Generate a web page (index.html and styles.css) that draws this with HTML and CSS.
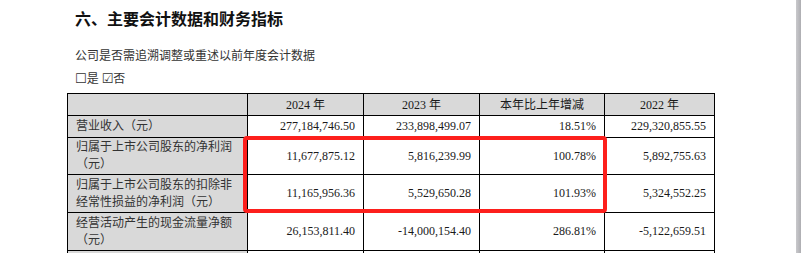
FILE: index.html
```html
<!DOCTYPE html>
<html lang="zh-CN">
<head>
<meta charset="utf-8">
<link rel="stylesheet" href="styles.css">
</head>
<body>
<div class="page">
  <div class="content">
    <h1 class="title">六、主要会计数据和财务指标</h1>
    <p class="note">公司是否需追溯调整或重述以前年度会计数据</p>
    <p class="choice"><span class="box">☐</span>是 <span class="box">☑</span>否</p>
    <div class="table-wrap">
      <table class="fin">
        <colgroup>
          <col class="c1"><col class="c2"><col class="c3"><col class="c4"><col class="c5">
        </colgroup>
        <tr class="r-head">
          <th class="lbl"></th>
          <th>2024 年</th>
          <th>2023 年</th>
          <th>本年比上年增减</th>
          <th>2022 年</th>
        </tr>
        <tr class="r1">
          <td class="lbl">营业收入（元）</td>
          <td class="num">277,184,746.50</td>
          <td class="num">233,898,499.07</td>
          <td class="num">18.51%</td>
          <td class="num">229,320,855.55</td>
        </tr>
        <tr class="r2">
          <td class="lbl">归属于上市公司股东的净利润（元）</td>
          <td class="num">11,677,875.12</td>
          <td class="num">5,816,239.99</td>
          <td class="num">100.78%</td>
          <td class="num">5,892,755.63</td>
        </tr>
        <tr class="r3">
          <td class="lbl">归属于上市公司股东的扣除非经常性损益的净利润（元）</td>
          <td class="num">11,165,956.36</td>
          <td class="num">5,529,650.28</td>
          <td class="num">101.93%</td>
          <td class="num">5,324,552.25</td>
        </tr>
        <tr class="r4">
          <td class="lbl">经营活动产生的现金流量净额（元）</td>
          <td class="num">26,153,811.40</td>
          <td class="num">-14,000,154.40</td>
          <td class="num">286.81%</td>
          <td class="num">-5,122,659.51</td>
        </tr>
        <tr class="r5">
          <td class="lbl"></td>
          <td class="num"></td>
          <td class="num"></td>
          <td class="num"></td>
          <td class="num"></td>
        </tr>
      </table>
      <div class="highlight"></div>
    </div>
  </div>
  <div class="edge"></div>
</div>
</body>
</html>
```
FILE: styles.css
```css
html, body {
  margin: 0;
  padding: 0;
  background: #ffffff;
  height: 100%;
  overflow: hidden;
}
.page {
  display: flex;
  height: 253px;
  overflow: hidden;
}
.content {
  flex: 1;
  padding-top: 8px;
}
.edge {
  width: 5px;
  background: linear-gradient(to right, #c9c9cc, #aeaeb2);
}
.title {
  margin: 0 0 0 75px;
  font-family: "Noto Sans CJK SC", sans-serif;
  font-weight: 700;
  font-size: 16px;
  line-height: 20px;
  color: #111;
}
.note, .choice {
  margin: 0 0 0 75px;
  font-family: "Liberation Serif", "Noto Sans CJK SC", serif;
  font-size: 12px;
  line-height: 16px;
  color: #333;
}
.note { margin-top: 20px; }
.choice { margin-top: 7px; }
.box {
  font-family: "DejaVu Sans", sans-serif;
  font-size: 13px;
  line-height: 16px;
  color: #333;
}
.table-wrap {
  position: relative;
  margin: 6px 0 0 67px;
  width: 647px;
}
.fin {
  border-collapse: collapse;
  table-layout: fixed;
  width: 647px;
  font-family: "Liberation Serif", "Noto Sans CJK SC", serif;
  font-size: 12px;
  color: #1a1a1a;
}
.c1 { width: 180px; }
.c2 { width: 116px; }
.c3 { width: 116px; }
.c4 { width: 125px; }
.c5 { width: 110px; }
.fin th, .fin td {
  border: 1px solid #000;
  padding: 0 8px;
  vertical-align: middle;
}
.fin th {
  background: #d9d9d9;
  font-weight: normal;
  text-align: center;
  line-height: 16px;
}
.fin td.lbl {
  background: #d9d9d9;
  color: #333;
  text-align: left;
  line-height: 17px;
  padding-right: 4px;
}
.fin td.num {
  text-align: right;
}
.r-head { height: 22px; }
.r1 { height: 22px; }
.r2 { height: 37px; }
.r3 { height: 38px; }
.r4 { height: 38px; }
.r5 { height: 22px; }
.highlight {
  position: absolute;
  left: 176px;
  top: 43px;
  width: 364px;
  height: 77px;
  box-sizing: border-box;
  border: 4px solid #fd1f1c;
  border-radius: 4px;
}
```
